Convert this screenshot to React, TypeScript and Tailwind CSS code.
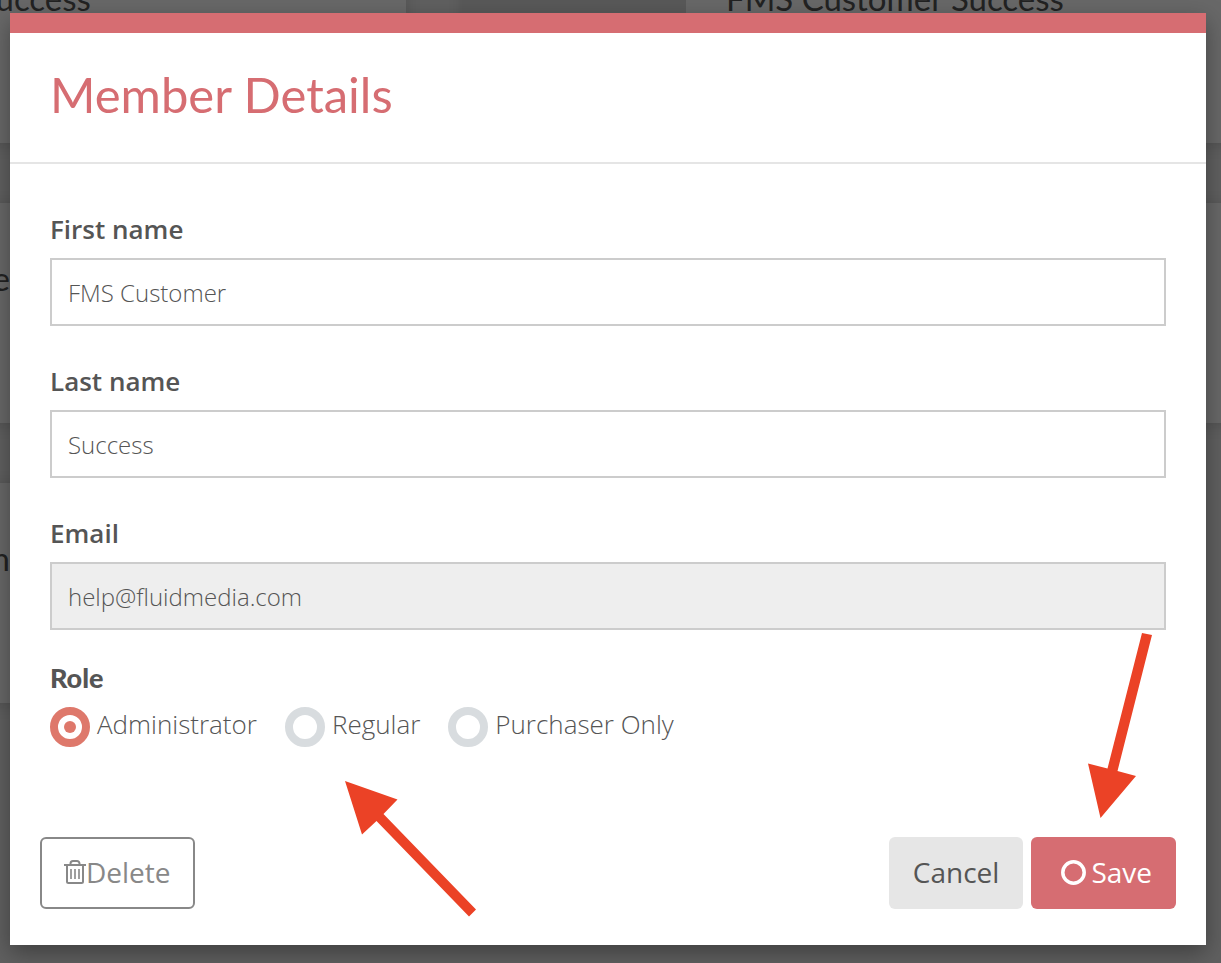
import { useState } from "react";

const ROLES = ["Administrator", "Regular", "Purchaser Only"];

const MEMBERS = [
  ["FMS Customer Success", "FMS Customer Success"],
  ["Customer Service", "Service"],
  ["Team", ""],
];

const LABEL = "block text-[26px] leading-9 font-semibold text-[#555]";
const INPUT = "mt-[11px] block h-[68px] w-full border-2 border-[#ccc] px-4 text-[24px] font-light text-[#555] outline-none";
const BUTTON = "flex h-[72px] cursor-pointer items-center rounded-md pb-0.5 text-[28px]";

function TrashIcon() {
  return (
    <svg width="22" height="24" viewBox="0 0 22 24" fill="none" stroke="currentColor" strokeWidth="2" aria-hidden="true">
      <path d="M0 5h22" />
      <path d="M6.500 5V3.500a2.500 2.500 0 0 1 2.500-2.500h4a2.500 2.500 0 0 1 2.500 2.500V5" />
      <path d="M3 5v16.500a1.500 1.500 0 0 0 1.500 1.500h13a1.500 1.500 0 0 0 1.500-1.500V5" />
      <path d="M7 9v10M11 9v10M15 9v10" strokeWidth="1.600" />
    </svg>
  );
}

// Member cards that sit under the dimmed backdrop
function MemberList() {
  return (
    <div className="absolute inset-0 overflow-hidden bg-[#606060]" aria-hidden="true">
      <div className="-mt-[77px] -ml-[510px] flex w-max flex-col gap-[60px]">
        {MEMBERS.map((row, i) => (
          <div key={i} className="flex gap-[57px]">
            {row.map((name, j) =>
              name ? (
                <div key={j} className="flex h-[220px] w-[916px] bg-[#686868] shadow-[0_2px_14px_rgba(0,0,0,0.15)]">
                  <div className="w-[223px] bg-[#595959]" />
                  <p className={`pt-[53px] font-[Lato,sans-serif] text-[33px] leading-[44px] whitespace-nowrap text-[#222] ${i > 0 ? "w-[297px] text-right" : "pl-10"}`}>{name}</p>
                </div>
              ) : null
            )}
          </div>
        ))}
      </div>
    </div>
  );
}

export default function App() {
  const [firstName, setFirstName] = useState("FMS Customer");
  const [lastName, setLastName] = useState("Success");
  const [role, setRole] = useState("Administrator");

  return (
    <div className="relative min-h-screen font-['Open_Sans',sans-serif]">
      <MemberList />

      <div className="relative pt-[13px] pr-[15px] pb-[18px] pl-[10px]">
        <div role="dialog" aria-labelledby="dialog-title" className="relative border-t-[20px] border-[#d66d72] bg-white shadow-[0_8px_22px_rgba(0,0,0,0.35)]">
          <header className="border-b-2 border-[#e5e5e5] px-10 pt-[31px] pb-[38px]">
            <h1 id="dialog-title" className="font-[Lato,sans-serif] text-[49px] leading-[60px] text-[#d66d72]">Member Details</h1>
          </header>

          <form onSubmit={e => e.preventDefault()}>
            <div className="flex flex-col gap-[37px] px-10 pt-[47px]">
              <div>
                <label htmlFor="first" className={LABEL}>First name</label>
                <input id="first" value={firstName} onChange={e => setFirstName(e.target.value)} className={INPUT} />
              </div>
              <div>
                <label htmlFor="last" className={LABEL}>Last name</label>
                <input id="last" value={lastName} onChange={e => setLastName(e.target.value)} className={INPUT} />
              </div>
              <div>
                <label htmlFor="email" className={LABEL}>Email</label>
                <input id="email" type="email" readOnly value="help@fluidmedia.com" className={`${INPUT} bg-[#eee]`} />
              </div>
            </div>

            <fieldset className="mx-10 mt-[30px]">
              <legend className="font-[Lato,sans-serif] text-[27px] leading-9 font-black text-[#555]">Role</legend>
              <div className="mt-[11px] flex flex-wrap gap-7">
                {ROLES.map(r => (
                  <label key={r} className="flex cursor-pointer items-center gap-[7px] text-[26px] leading-9 font-light text-[#555]">
                    <input type="radio" name="role" value={r} checked={role === r} onChange={() => setRole(r)}
                      className="grid size-10 appearance-none place-items-center rounded-full border-8 border-[#d8dcdf] bg-white checked:border-[#de786b] checked:before:size-3 checked:before:rounded-full checked:before:bg-[#de786b]" />
                    <span className="-mt-1.5">{r}</span>
                  </label>
                ))}
              </div>
            </fieldset>

            <footer className="flex gap-2 px-[30px] pt-[90px] pb-9">
              <button type="button" className={`${BUTTON} mr-auto border-2 border-[#888] bg-white px-[22px] text-[#888]`}>
                <TrashIcon />
                Delete
              </button>
              <button type="button" className={`${BUTTON} bg-[#e6e6e6] px-6 text-[#555]`}>Cancel</button>
              <button type="submit" className={`${BUTTON} gap-[5px] bg-[#d66d72] pr-6 pl-[30px] text-white`}>
                <svg width="25" height="25" viewBox="0 0 25 25" fill="none" stroke="currentColor" strokeWidth="3.500" aria-hidden="true">
                  <circle cx="12.500" cy="12.500" r="10.700" />
                </svg>
                Save
              </button>
            </footer>
          </form>

          {/* Callout arrows */}
          <svg className="pointer-events-none absolute bottom-[28px] left-[335px]" width="132" height="136" viewBox="0 0 132 136" fill="#eb4226" aria-hidden="true">
            <path d="M0 0L52.500 18.500L38.500 33L131 128.500L124 135.500L31.500 40L17 53.500Z" />
          </svg>
          <svg className="pointer-events-none absolute right-[54px] bottom-[127px]" width="64" height="185" viewBox="0 0 64 185" fill="#eb4226" aria-hidden="true">
            <path d="M12.500 185L0 130.500L19.500 135.500L54 0L64 2L29.500 138L48 143Z" />
          </svg>
        </div>
      </div>
    </div>
  );
}
